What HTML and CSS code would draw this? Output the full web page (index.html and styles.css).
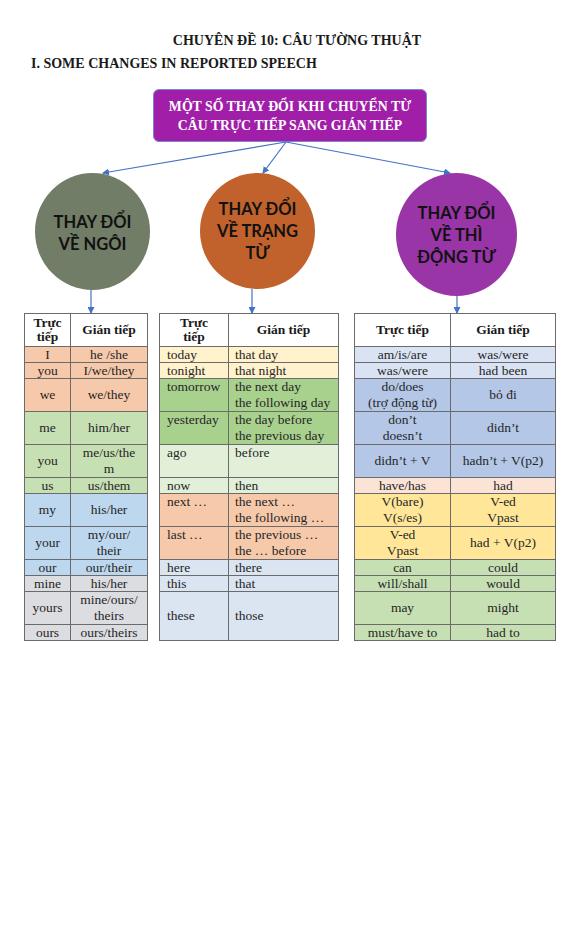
FILE: index.html
```html
<!DOCTYPE html>
<html lang="vi">
<head>
<meta charset="utf-8">
<title>Chuyên đề 10: Câu tường thuật</title>
<link rel="stylesheet" href="styles.css">
</head>
<body>
<div class="page">
  <h1 class="title">CHUYÊN ĐỀ 10: CÂU TƯỜNG THUẬT</h1>
  <h2 class="section">I. SOME CHANGES IN REPORTED SPEECH</h2>

  <div class="box-row">
    <div class="main-box">MỘT SỐ THAY ĐỔI KHI CHUYỂN TỪ<br>CÂU TRỰC TIẾP SANG GIÁN TIẾP</div>
  </div>

  <div class="circle-row">
    <div class="circle c-green">THAY ĐỔI<br>VỀ NGÔI</div>
    <div class="circle c-orange">THAY ĐỔI<br>VỀ TRẠNG<br>TỪ</div>
    <div class="circle c-purple">THAY ĐỔI<br>VỀ THÌ<br>ĐỘNG TỪ</div>
  </div>

  <div class="table-row">
    <table class="tbl t1">
      <colgroup><col class="t1c1"><col></colgroup>
      <tr class="hd"><th class="wrap">Trực<br>tiếp</th><th>Gián tiếp</th></tr>
      <tr class="s peach"><td>I</td><td>he /she</td></tr>
      <tr class="s peach"><td>you</td><td>I/we/they</td></tr>
      <tr class="d peach"><td>we</td><td>we/they</td></tr>
      <tr class="d green"><td>me</td><td>him/her</td></tr>
      <tr class="d green"><td>you</td><td>me/us/the<br>m</td></tr>
      <tr class="s green"><td>us</td><td>us/them</td></tr>
      <tr class="d blue"><td>my</td><td>his/her</td></tr>
      <tr class="d blue"><td>your</td><td>my/our/<br>their</td></tr>
      <tr class="s blue"><td>our</td><td>our/their</td></tr>
      <tr class="s grey"><td>mine</td><td>his/her</td></tr>
      <tr class="d grey"><td>yours</td><td>mine/ours/<br>theirs</td></tr>
      <tr class="s grey"><td>ours</td><td>ours/theirs</td></tr>
    </table>

    <table class="tbl t2">
      <colgroup><col class="t2c1"><col></colgroup>
      <tr class="hd"><th class="wrap">Trực<br>tiếp</th><th>Gián tiếp</th></tr>
      <tr class="s yellow"><td>today</td><td>that day</td></tr>
      <tr class="s yellow"><td>tonight</td><td>that night</td></tr>
      <tr class="d dgreen top"><td>tomorrow</td><td>the next day<br>the following day</td></tr>
      <tr class="d dgreen top"><td>yesterday</td><td>the day before<br>the previous day</td></tr>
      <tr class="d lgreen top"><td>ago</td><td>before</td></tr>
      <tr class="s lgreen"><td>now</td><td>then</td></tr>
      <tr class="d peach top"><td>next …</td><td>the next …<br>the following …</td></tr>
      <tr class="d peach top"><td>last …</td><td>the previous …<br>the … before</td></tr>
      <tr class="s lblue"><td>here</td><td>there</td></tr>
      <tr class="s lblue"><td>this</td><td>that</td></tr>
      <tr class="t lblue"><td>these</td><td>those</td></tr>
    </table>

    <table class="tbl t3">
      <colgroup><col class="t3c1"><col></colgroup>
      <tr class="hd"><th>Trực tiếp</th><th>Gián tiếp</th></tr>
      <tr class="s pblue"><td>am/is/are</td><td>was/were</td></tr>
      <tr class="s pblue"><td>was/were</td><td>had been</td></tr>
      <tr class="d mblue"><td>do/does<br>(trợ động từ)</td><td>bỏ đi</td></tr>
      <tr class="d mblue"><td>don’t<br>doesn’t</td><td>didn’t</td></tr>
      <tr class="d mblue"><td>didn’t + V</td><td>hadn’t + V(p2)</td></tr>
      <tr class="s pink"><td>have/has</td><td>had</td></tr>
      <tr class="d gold"><td>V(bare)<br>V(s/es)</td><td>V-ed<br>Vpast</td></tr>
      <tr class="d gold"><td>V-ed<br>Vpast</td><td>had + V(p2)</td></tr>
      <tr class="s green"><td>can</td><td>could</td></tr>
      <tr class="s green"><td>will/shall</td><td>would</td></tr>
      <tr class="d green"><td>may</td><td>might</td></tr>
      <tr class="s green"><td>must/have to</td><td>had to</td></tr>
    </table>
  </div>

  <svg class="connectors" width="576" height="330" viewBox="0 0 576 330" aria-hidden="true">
    <defs>
      <marker id="ah" markerUnits="userSpaceOnUse" markerWidth="7" markerHeight="7" refX="6" refY="3.5" orient="auto">
        <path d="M0,0 L7,3.5 L0,7 z" fill="#4472c4"/>
      </marker>
    </defs>
    <g stroke="#4472c4" stroke-width="1.2" fill="none" marker-end="url(#ah)">
      <line x1="286" y1="142" x2="103" y2="173"/>
      <line x1="286" y1="142" x2="263" y2="173"/>
      <line x1="286" y1="142" x2="450" y2="173"/>
      <line x1="91" y1="290" x2="91" y2="313"/>
      <line x1="252" y1="289" x2="252" y2="313"/>
      <line x1="457" y1="296" x2="457" y2="313"/>
    </g>
  </svg>
</div>
</body>
</html>
```

FILE: styles.css
```css
* { box-sizing: border-box; }

html, body {
  margin: 0;
  padding: 0;
  background: #ffffff;
}

.page {
  position: relative;
  width: 576px;
  min-height: 938px;
  padding-top: 32px;
  font-family: "Liberation Serif", "Times New Roman", serif;
  color: #1f1f1f;
}

.title {
  margin: 0;
  padding-left: 18px;
  font-size: 14px;
  line-height: 18px;
  font-weight: bold;
  text-align: center;
  color: #1a1a1a;
}

.section {
  margin: 5px 0 0;
  padding-left: 31px;
  font-size: 14px;
  line-height: 18px;
  font-weight: bold;
  color: #1a1a1a;
}

.box-row {
  margin-top: 16px;
  padding-left: 153px;
}

.main-box {
  width: 274px;
  height: 53px;
  border: 1px solid #7b86d0;
  border-radius: 6px;
  background: #a11fa8;
  color: #ffffff;
  font-weight: bold;
  font-size: 13.8px;
  line-height: 19px;
  text-align: center;
  display: flex;
  align-items: center;
  justify-content: center;
}

.circle-row {
  margin-top: 31px;
  padding-left: 35px;
  display: flex;
  align-items: flex-start;
  height: 123px;
}

.circle {
  border-radius: 50%;
  display: flex;
  align-items: center;
  justify-content: center;
  text-align: center;
  font-family: "Lato", "Noto Sans", sans-serif;
  font-weight: bold;
  font-size: 16.5px;
  line-height: 22px;
  color: #111111;
}

.c-green {
  width: 115px;
  height: 117px;
  background: #717d67;
  padding-top: 2px;
}

.c-orange {
  width: 115px;
  height: 116px;
  margin-left: 50px;
  background: #c1622c;
}

.c-purple {
  width: 121px;
  height: 123px;
  margin-left: 81px;
  background: #9935a7;
}

.table-row {
  margin-top: 17px;
  padding-left: 24px;
  display: flex;
  align-items: flex-start;
}

.tbl {
  border-collapse: collapse;
  table-layout: fixed;
  font-size: 13.5px;
  line-height: 16px;
  color: #262626;
}

.tbl th, .tbl td {
  border: 1px solid #6b6b6b;
  padding: 0 2px;
  vertical-align: middle;
  white-space: nowrap;
}

.tbl th {
  font-weight: bold;
  background: #ffffff;
  color: #1a1a1a;
}

.tbl th.wrap { line-height: 14px; }

.t1 { width: 124px; }
.t1c1 { width: 46px; }
.t1 td, .t1 th { text-align: center; }

.t2 { width: 180px; margin-left: 11px; }
.t2c1 { width: 69px; }
.t2 th { text-align: center; }
.t2 td { text-align: left; padding-left: 6px; }
.t2 td:first-child { padding-left: 7px; }
.t2 tr.top td { vertical-align: top; }

.t3 { width: 202px; margin-left: 15px; }
.t3c1 { width: 96px; }
.t3 td, .t3 th { text-align: center; }

tr.hd th { height: 33px; }
tr.s td { height: 16px; line-height: 15px; }
tr.d td { height: 33px; }
tr.t td { height: 49px; }

.peach td { background: #f6c9ab; }
.green td { background: #c6e0b4; }
.blue td { background: #bdd7ee; }
.grey td { background: #dcdde1; }
.yellow td { background: #fff2cc; }
.dgreen td { background: #a9d18e; }
.lgreen td { background: #e2efd9; }
.lblue td { background: #dbe5f2; }
.pblue td { background: #dae3f3; }
.mblue td { background: #b4c7e7; }
.pink td { background: #fbe4d5; }
.gold td { background: #ffe699; }

.connectors {
  position: absolute;
  top: 0;
  left: 0;
  pointer-events: none;
}
```
